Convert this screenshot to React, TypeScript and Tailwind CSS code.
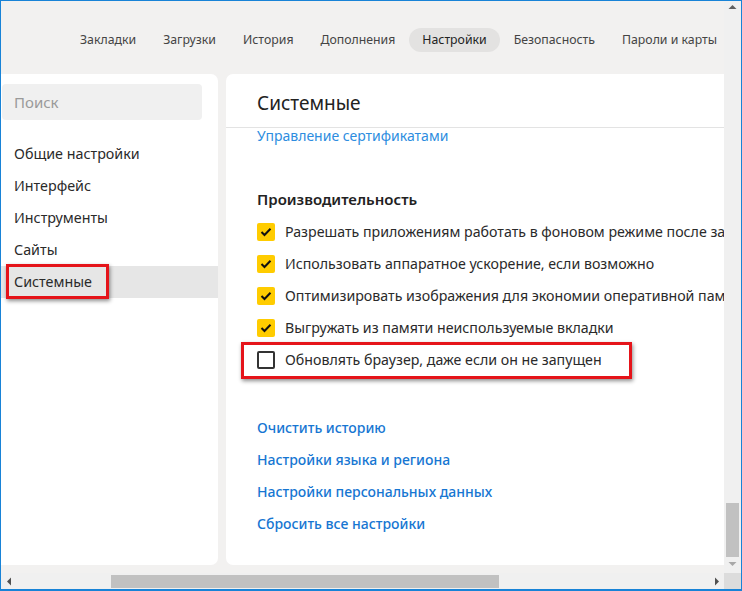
import React from "react";

const tabs = ["Закладки", "Загрузки", "История", "Дополнения", "Настройки", "Безопасность", "Пароли и карты"];
const side = ["Общие настройки", "Интерфейс", "Инструменты", "Сайты"];
const checks = [
  "Разрешать приложениям работать в фоновом режиме после закрытия браузера",
  "Использовать аппаратное ускорение, если возможно",
  "Оптимизировать изображения для экономии оперативной памяти",
  "Выгружать из памяти неиспользуемые вкладки",
];
const links = ["Очистить историю", "Настройки языка и региона", "Настройки персональных данных", "Сбросить все настройки"];

function Check() {
  return (
    <span className="flex h-[18px] w-[18px] shrink-0 items-center justify-center rounded-[2px] bg-[#ffcc00]">
      <svg width="12" height="10" viewBox="0 0 12 10">
        <path d="M1.5 5 L4.5 8 L10.5 1.8" fill="none" stroke="#111" strokeWidth="2" />
      </svg>
    </span>
  );
}

export default function App() {
  return (
    <div
      className="flex h-[591px] w-[742px] flex-col overflow-hidden border border-b-2 border-[#1883d7] bg-[#f2f1f0] text-[#333]"
      style={{ fontFamily: '"Noto Sans", "Open Sans", sans-serif' }}
    >
      <div className="flex min-h-0 flex-1">
        {/* content */}
        <div className="flex min-w-0 flex-1 flex-col">
          <div className="flex h-[73px] shrink-0 items-center pl-[66px] pt-[4px]">
            {tabs.map((t) => (
              <span
                key={t}
                className={
                  "mr-[1px] whitespace-nowrap rounded-full px-[13px] py-[3px] text-[12.3px] leading-[18px] " +
                  (t === "Настройки" ? "bg-[#e3e2e1] text-[#222]" : "text-[#444]")
                }
              >
                {t}
              </span>
            ))}
          </div>
          <div className="flex min-h-0 flex-1 gap-[8px] pb-[8px]">
            {/* sidebar */}
            <div className="relative flex w-[217px] shrink-0 flex-col rounded-r-[7px] bg-white pt-[10px]">
              <div className="ml-[1px] flex h-[36px] w-[200px] items-center rounded-[4px] bg-[#f0f0f0] pl-[12px] text-[15px] text-[#9a9a9a]">
                Поиск
              </div>
              <div className="mt-[18px] flex flex-col">
                {side.map((s) => (
                  <div key={s} className="flex h-[32px] items-center pl-[13px] text-[14.3px] text-[#2a2a2a]">
                    {s}
                  </div>
                ))}
                <div className="relative flex h-[32px] items-center bg-[#e6e6e6] pl-[13px] text-[14.3px] text-[#2a2a2a]">
                  Системные
                  <div className="absolute left-[5px] top-[-2px] h-[35px] w-[103px] border-[3px] border-[#e5141a] shadow-[1px_2px_4px_rgba(0,0,0,0.45)]" />
                </div>
              </div>
            </div>
            {/* main */}
            <div className="relative flex min-w-0 flex-1 flex-col overflow-hidden rounded-l-[7px] bg-white">
              <div className="flex h-[54px] shrink-0 items-center border-b border-[#e3e3e3] pl-[31px] pt-[6px] text-[19px] text-[#222]">
                Системные
              </div>
              <div className="flex flex-col pl-[31px]">
                <div className="mt-[-2px] whitespace-nowrap text-[14px] leading-[20px] text-[#2d8de0]">
                  Управление сертификатами
                </div>
                <div className="mt-[43px] whitespace-nowrap text-[15px] font-semibold leading-[20px] text-[#222]">
                  Производительность
                </div>
                <div className="mt-[7px] flex flex-col">
                  {checks.map((c) => (
                    <div key={c} className="flex h-[32px] items-center gap-[10px] whitespace-nowrap text-[14.2px] text-[#2a2a2a]">
                      <Check />
                      {c}
                    </div>
                  ))}
                  <div className="relative flex h-[32px] items-center gap-[10px] whitespace-nowrap text-[14.2px] text-[#2a2a2a]">
                    <span className="h-[18px] w-[18px] shrink-0 rounded-[2px] border-2 border-[#333] bg-white" />
                    Обновлять браузер, даже если он не запущен
                    <div className="absolute left-[-16px] top-[-2px] h-[37px] w-[391px] border-[3px] border-[#e5141a] shadow-[1px_2px_4px_rgba(0,0,0,0.45)]" />
                  </div>
                </div>
                <div className="mt-[35px] flex flex-col">
                  {links.map((l) => (
                    <div key={l} className="flex h-[32px] items-center whitespace-nowrap text-[14px] font-medium text-[#1676d2]">
                      {l}
                    </div>
                  ))}
                </div>
              </div>
            </div>
          </div>
        </div>
        {/* vertical scrollbar */}
        <div className="flex w-[17px] shrink-0 flex-col items-center bg-[#f0f0f0]">
          <svg width="9" height="6" viewBox="0 0 9 6" className="mt-[3px]">
            <path d="M0.5 5 L4.5 1 L8.5 5 Z" fill="#606060" />
          </svg>
          <div className="flex-1" />
          <div className="h-[54px] w-[13px] bg-[#c1c1c1]" />
          <svg width="9" height="6" viewBox="0 0 9 6" className="mb-[6px] mt-[4px]">
            <path d="M0.5 1 L4.5 5 L8.5 1 Z" fill="#a8a8a8" />
          </svg>
        </div>
      </div>
      {/* horizontal scrollbar */}
      <div className="flex h-[16px] shrink-0">
        <div className="flex flex-1 items-center bg-[#f0f0f0]">
          <svg width="6" height="9" viewBox="0 0 6 9" className="ml-[5px]">
            <path d="M5 0.5 L1 4.5 L5 8.5 Z" fill="#505050" />
          </svg>
          <div className="ml-[99px] h-[13px] w-[388px] bg-[#c1c1c1]" />
          <div className="flex-1" />
          <svg width="6" height="9" viewBox="0 0 6 9" className="mr-[4px]">
            <path d="M1 0.5 L5 4.5 L1 8.5 Z" fill="#505050" />
          </svg>
        </div>
        <div className="w-[17px] bg-[#dcdcdc]" />
      </div>
    </div>
  );
}
